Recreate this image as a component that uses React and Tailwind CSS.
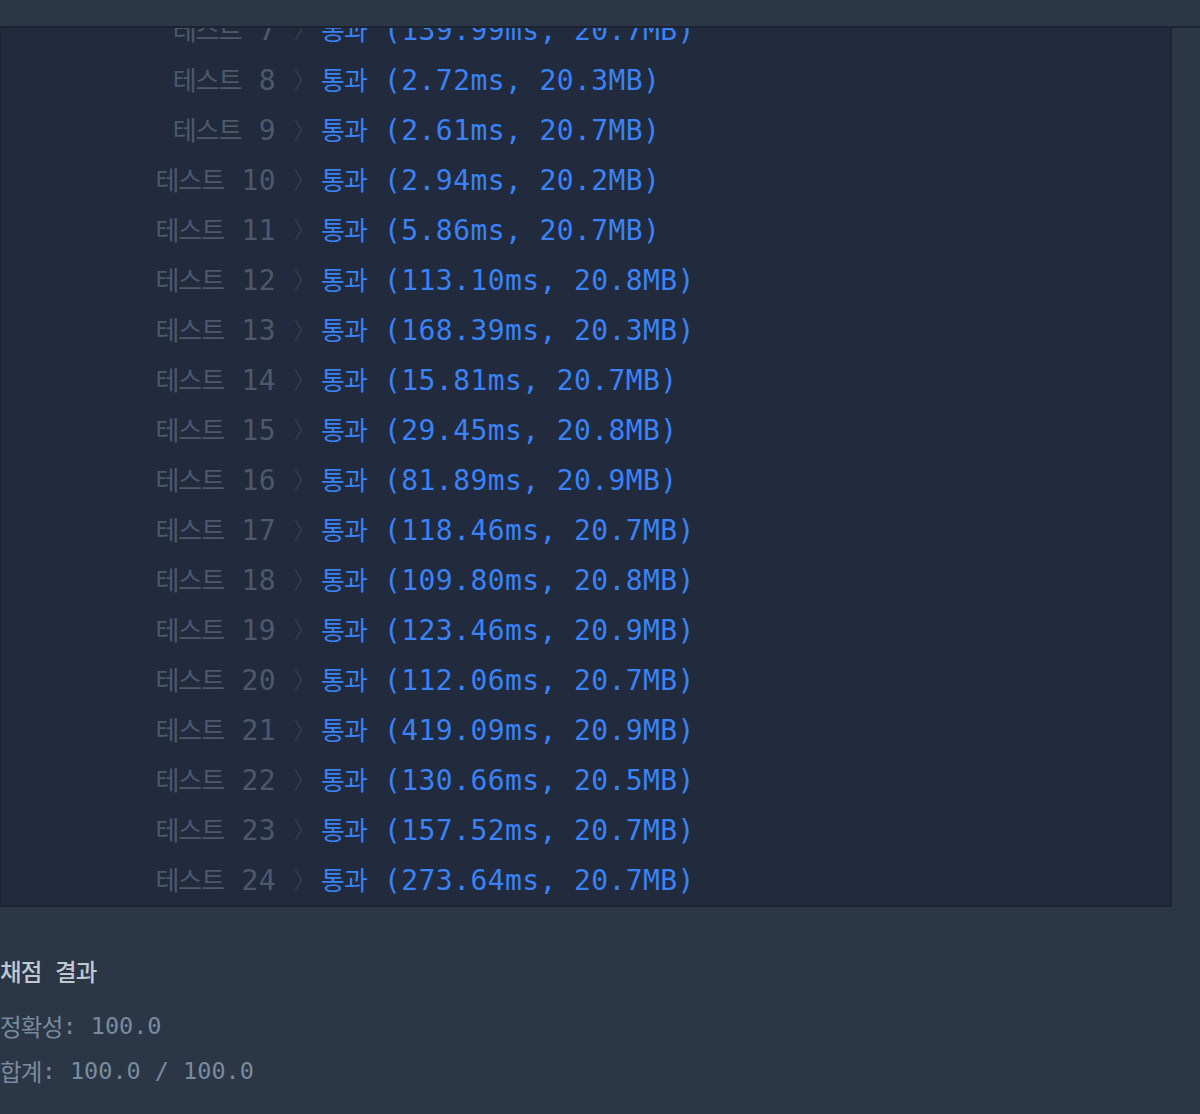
import React from 'react';

const results = [
  [7, '139.99ms', '20.7MB'],
  [8, '2.72ms', '20.3MB'],
  [9, '2.61ms', '20.7MB'],
  [10, '2.94ms', '20.2MB'],
  [11, '5.86ms', '20.7MB'],
  [12, '113.10ms', '20.8MB'],
  [13, '168.39ms', '20.3MB'],
  [14, '15.81ms', '20.7MB'],
  [15, '29.45ms', '20.8MB'],
  [16, '81.89ms', '20.9MB'],
  [17, '118.46ms', '20.7MB'],
  [18, '109.80ms', '20.8MB'],
  [19, '123.46ms', '20.9MB'],
  [20, '112.06ms', '20.7MB'],
  [21, '419.09ms', '20.9MB'],
  [22, '130.66ms', '20.5MB'],
  [23, '157.52ms', '20.7MB'],
  [24, '273.64ms', '20.7MB'],
];

const mono = "font-['DejaVu_Sans_Mono','Noto_Sans_CJK_KR',monospace]";
const ko = "font-['Noto_Sans_CJK_KR',sans-serif] text-[26px] tracking-[-1px]";
const koSmall = "font-['Noto_Sans_CJK_KR',sans-serif] text-[23.5px] tracking-[-0.8px]";

const Chevron = () => (
  <svg width="9" height="22" viewBox="0 0 9 22" fill="none" className="block">
    <path d="M1.5 1 L7.5 11 L1.5 21" stroke="#364152" strokeWidth="1.4" strokeLinecap="round" strokeLinejoin="round" />
  </svg>
);

const ResultRow = ({ no, time, mem }) => (
  <div className={`flex items-center h-[50px] pt-[1px] ${mono} text-[28px] tracking-[0.4px] leading-none whitespace-pre`}>
    <div className="w-[275px] text-right text-[#4d596b]">
      <span className={ko}>테스트</span> {no}
    </div>
    <div className="w-[45px] flex justify-center -mt-[1px]">
      <Chevron />
    </div>
    <div className="text-[#3a82f6]">
      <span className={ko}>통과</span> ({time}, {mem})
    </div>
  </div>
);

export default function App() {
  return (
    <div className="w-[1200px] h-[1114px] overflow-hidden bg-[#2b3647]">
      {/* top bar */}
      <div className="h-[28px] bg-[#2b3647] border-b-2 border-[#1c2433]" />

      {/* results panel, scrolled */}
      <div className="w-[1172px] h-[879px] overflow-hidden bg-[#212b3d] border-l border-r-2 border-b-2 border-[#1c2433]">
        <div className="-mt-[23px]">
          {results.map(([no, time, mem]) => (
            <ResultRow key={no} no={no} time={time} mem={mem} />
          ))}
        </div>
      </div>

      {/* summary */}
      <div className={`${mono} whitespace-pre`}>
        <div className="mt-[50px] h-[30px] flex items-center text-[22px] text-[#c1c8d1]">
          <span className="font-['Noto_Sans_CJK_KR',sans-serif] text-[23.5px] font-medium tracking-[-0.8px]">채점</span>
          <span> </span>
          <span className="font-['Noto_Sans_CJK_KR',sans-serif] text-[23.5px] font-medium tracking-[-0.8px]">결과</span>
        </div>
        <div className="mt-[17px] text-[23.5px] text-[#798c9f]">
          <div className="h-[45px] flex items-center">
            <span className={koSmall}>정확성</span>: 100.0
          </div>
          <div className="h-[45px] flex items-center">
            <span className={koSmall}>합계</span>: 100.0 / 100.0
          </div>
        </div>
      </div>
    </div>
  );
}
